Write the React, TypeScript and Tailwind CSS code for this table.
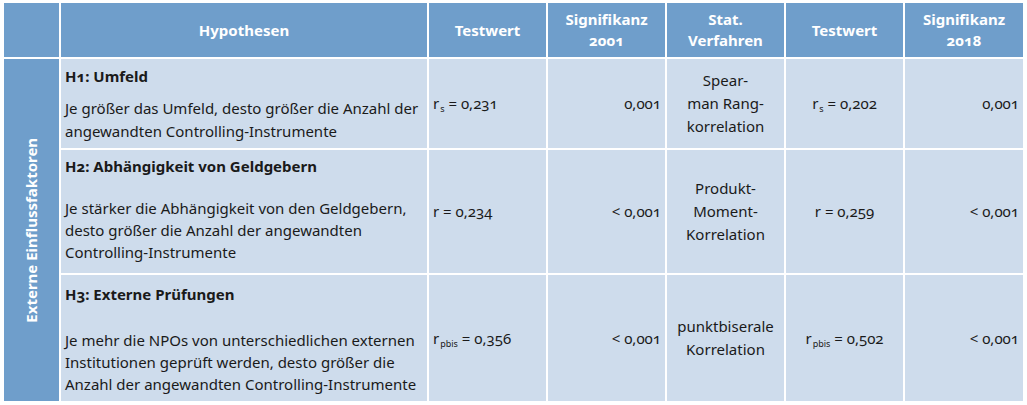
import React from "react";

const F = { fontFamily: '"Noto Sans", "Open Sans", sans-serif' };

function Sub({ v, s }: { v: string; s: string }) {
  return (
    <span>
      r<sub className="text-[9px] align-baseline relative top-[3px] ml-[1px]">{s}</sub> = {v}
    </span>
  );
}

const head = "bg-[#6f9ecb] text-white font-bold flex items-center justify-center text-center leading-[21px]";
const body = "bg-[#cedcec] text-[#1a1a1a] flex items-center";

export default function App() {
  return (
    <div className="bg-white w-[1027px] h-[405px] pt-[3px] pl-[4px] text-[15px] oldstyle-nums" style={F}>
      <div className="grid grid-cols-[55px_366px_117px_117px_117px_117px_118px] grid-rows-[54px_89px_123px_126px] gap-[2px] w-[1019px]">
        <div className="bg-[#6f9ecb]" />
        <div className={head}>Hypothesen</div>
        <div className={head}>Testwert</div>
        <div className={head}>Signifikanz<br />2001</div>
        <div className={head}>Stat.<br />Verfahren</div>
        <div className={head}>Testwert</div>
        <div className={head}>Signifikanz<br />2018</div>

        <div className="row-span-3 bg-[#6f9ecb] flex items-center justify-center">
          <div className="-rotate-90 whitespace-nowrap text-white font-bold text-[15px]">Externe Einflussfaktoren</div>
        </div>

        {/* Row 1 */}
        <div className="bg-[#cedcec] text-[#1a1a1a] pl-[4px] pt-[6px] leading-[23px]">
          <div className="font-bold">H1: Umfeld</div>
          <div className="mt-[9px]">Je größer das Umfeld, desto größer die Anzahl der angewandten Controlling-Instrumente</div>
        </div>
        <div className={`${body} pl-[4px]`}><Sub s="s" v="0,231" /></div>
        <div className={`${body} justify-end pr-[4px]`}>0,001</div>
        <div className={`${body} justify-center text-center leading-[23px]`}>Spear-<br />man Rang-<br />korrelation</div>
        <div className={`${body} justify-center`}><Sub s="s" v="0,202" /></div>
        <div className={`${body} justify-end pr-[4px]`}>0,001</div>

        {/* Row 2 */}
        <div className="bg-[#cedcec] text-[#1a1a1a] pl-[4px] pt-[5px] leading-[22px]">
          <div className="font-bold">H2: Abhängigkeit von Geldgebern</div>
          <div className="mt-[20px]">Je stärker die Abhängigkeit von den Geldgebern, desto größer die Anzahl der angewandten Controlling-Instrumente</div>
        </div>
        <div className={`${body} pl-[4px]`}>r = 0,234</div>
        <div className={`${body} justify-end pr-[4px]`}>&lt; 0,001</div>
        <div className={`${body} justify-center text-center leading-[23px]`}>Produkt-<br />Moment-<br />Korrelation</div>
        <div className={`${body} justify-center`}>r = 0,259</div>
        <div className={`${body} justify-end pr-[4px]`}>&lt; 0,001</div>

        {/* Row 3 */}
        <div className="bg-[#cedcec] text-[#1a1a1a] pl-[4px] pt-[8px] leading-[22px]">
          <div className="font-bold">H3: Externe Prüfungen</div>
          <div className="mt-[24px]">Je mehr die NPOs von unterschiedlichen externen Institutionen geprüft werden, desto größer die Anzahl der angewandten Controlling-Instrumente</div>
        </div>
        <div className={`${body} pl-[4px]`}><Sub s="pbis" v="0,356" /></div>
        <div className={`${body} justify-end pr-[4px]`}>&lt; 0,001</div>
        <div className={`${body} justify-center text-center leading-[23px]`}>punktbiserale<br />Korrelation</div>
        <div className={`${body} justify-center`}><Sub s="pbis" v="0,502" /></div>
        <div className={`${body} justify-end pr-[4px]`}>&lt; 0,001</div>
      </div>
    </div>
  );
}
